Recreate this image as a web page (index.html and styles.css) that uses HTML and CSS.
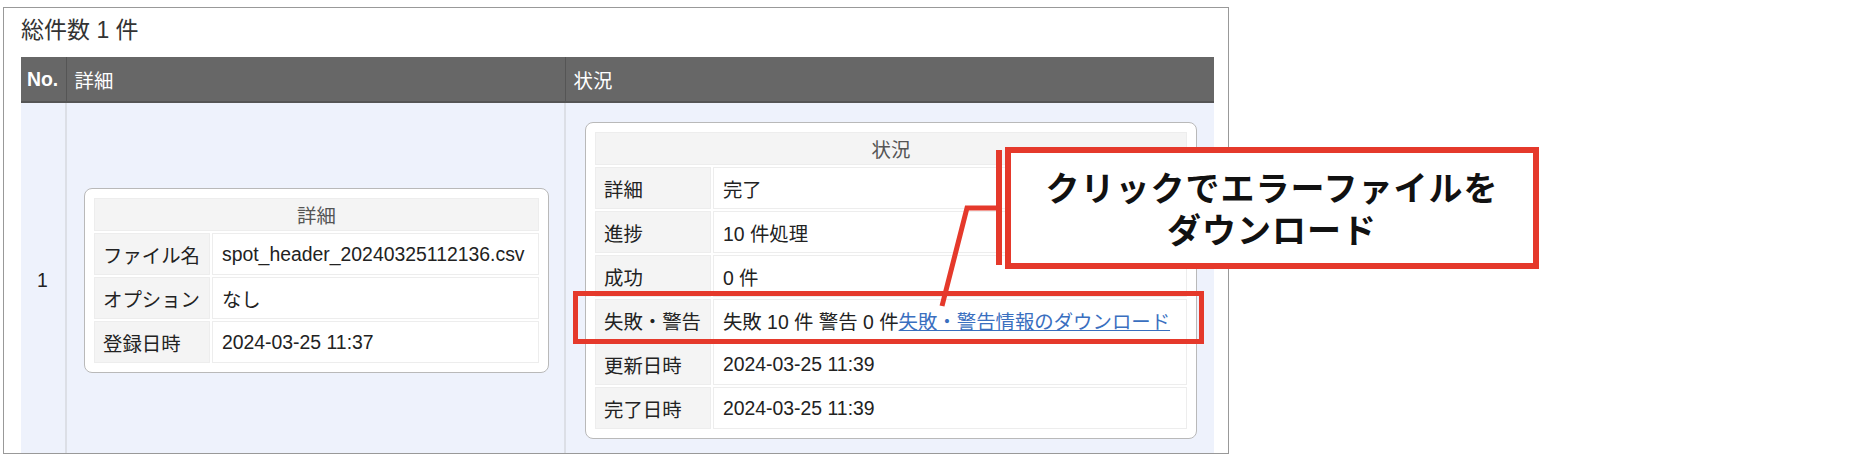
FILE: index.html
```html
<!DOCTYPE html>
<html lang="ja">

<head>
    <meta charset="UTF-8">
    <meta name="viewport" content="width=device-width, initial-scale=1.0">
    <title>インポート状況</title>
    <link rel="stylesheet" href="styles.css">
</head>

<body>
    <div class="panel">
        <div class="total">総件数 1 件</div>
        <table class="list">
            <colgroup>
                <col class="col-no">
                <col class="col-detail">
                <col class="col-status">
            </colgroup>
            <thead>
                <tr>
                    <th class="head-no">No.</th>
                    <th>詳細</th>
                    <th>状況</th>
                </tr>
            </thead>
            <tbody>
                <tr>
                    <td class="cell-no">1</td>
                    <td class="cell-detail">
                        <div class="card">
                            <table class="info">
                                <tr><th colspan="2">詳細</th></tr>
                                <tr><td class="label">ファイル名</td><td>spot_header_20240325112136.csv</td></tr>
                                <tr><td class="label">オプション</td><td>なし</td></tr>
                                <tr><td class="label">登録日時</td><td>2024-03-25 11:37</td></tr>
                            </table>
                        </div>
                    </td>
                    <td class="cell-status">
                        <div class="card">
                            <table class="info">
                                <tr><th colspan="2">状況</th></tr>
                                <tr><td class="label">詳細</td><td>完了</td></tr>
                                <tr><td class="label">進捗</td><td>10 件処理</td></tr>
                                <tr><td class="label">成功</td><td>0 件</td></tr>
                                <tr><td class="label">失敗・警告</td><td>失敗 10 件 警告 0 件<a href="#">失敗・警告情報のダウンロード</a></td></tr>
                                <tr><td class="label">更新日時</td><td>2024-03-25 11:39</td></tr>
                                <tr><td class="label">完了日時</td><td>2024-03-25 11:39</td></tr>
                            </table>
                        </div>
                    </td>
                </tr>
            </tbody>
        </table>
    </div>

    <!-- annotation overlay -->
    <div class="highlight"></div>
    <svg class="leader" width="1872" height="462" viewBox="0 0 1872 462">
        <line x1="999" y1="150" x2="999" y2="265" stroke="#e5392b" stroke-width="6" />
        <polyline points="999,208 967,208 942,306" fill="none" stroke="#e5392b" stroke-width="5" />
    </svg>
    <div class="callout">クリックでエラーファイルを<br>ダウンロード</div>
</body>

</html>
```

FILE: styles.css
```css
body {
    margin: 0;
    padding: 0;
    background-color: #fff;
    font-family: "Liberation Sans", "Noto Sans CJK JP", sans-serif;
    color: #222;
    font-size: 19.4px;
}

.panel {
    box-sizing: border-box;
    width: 1226px;
    height: 447px;
    margin: 7px 0 0 3px;
    padding: 0 14px 0 17px;
    border: 1px solid #999;
    overflow: hidden;
}

.total {
    height: 49px;
    line-height: 44px;
    font-size: 23px;
    color: #333;
}

.list {
    width: 1193px;
    border-collapse: collapse;
    table-layout: fixed;
}

.col-no {
    width: 45px;
}

.col-detail {
    width: 499px;
}

.col-status {
    width: 649px;
}

.list > thead > tr > th {
    height: 44px;
    padding: 0 8px;
    background-color: #676767;
    color: #fff;
    text-align: left;
    font-weight: normal;
    border-left: 1px solid #555;
    border-bottom: 2px solid #555;
}

.list > thead > tr > th.head-no {
    border-left: none;
    padding: 0 6px;
    font-weight: bold;
}

.list > tbody > tr > td {
    background-color: #eef2fc;
    vertical-align: middle;
    border-left: 2px solid #dcdfe6;
}

.list > tbody > tr > td.cell-no {
    border-left: none;
    padding-left: 16px;
}

.list > tbody > tr > td.cell-detail {
    padding: 0 15px 0 17px;
}

.list > tbody > tr > td.cell-status {
    padding: 19px 17px 19px 19px;
}

.card {
    background-color: #fff;
    border: 1px solid #b9b9b9;
    border-radius: 8px;
    padding: 7px;
}

.info {
    width: 100%;
    border-collapse: separate;
    border-spacing: 2px;
}

.info th {
    box-sizing: border-box;
    height: 32px;
    background-color: #f4f4f4;
    border: 1px solid #ededed;
    color: #555;
    font-weight: normal;
    text-align: center;
}

.info td {
    box-sizing: border-box;
    height: 42px;
    padding: 0 9px;
    border: 1px solid #ededed;
    background-color: #fff;
    white-space: nowrap;
}

.info td.label {
    width: 115px;
    padding-left: 8px;
    background-color: #f4f4f4;
}

.info a {
    color: #3a6fbf;
    text-decoration: underline;
}

/* annotation */
.highlight {
    position: absolute;
    left: 573px;
    top: 291px;
    width: 621px;
    height: 43px;
    border: 5px solid #e5392b;
}

.leader {
    position: absolute;
    left: 0;
    top: 0;
    pointer-events: none;
}

.callout {
    position: absolute;
    left: 1005px;
    top: 147px;
    width: 522px;
    height: 110px;
    border: 6px solid #e5392b;
    background-color: #fff;
    font-family: "Noto Sans CJK JP", sans-serif;
    font-weight: bold;
    font-size: 34px;
    letter-spacing: 1px;
    line-height: 42px;
    color: #111;
    text-align: center;
    display: flex;
    align-items: center;
    justify-content: center;
}
```
